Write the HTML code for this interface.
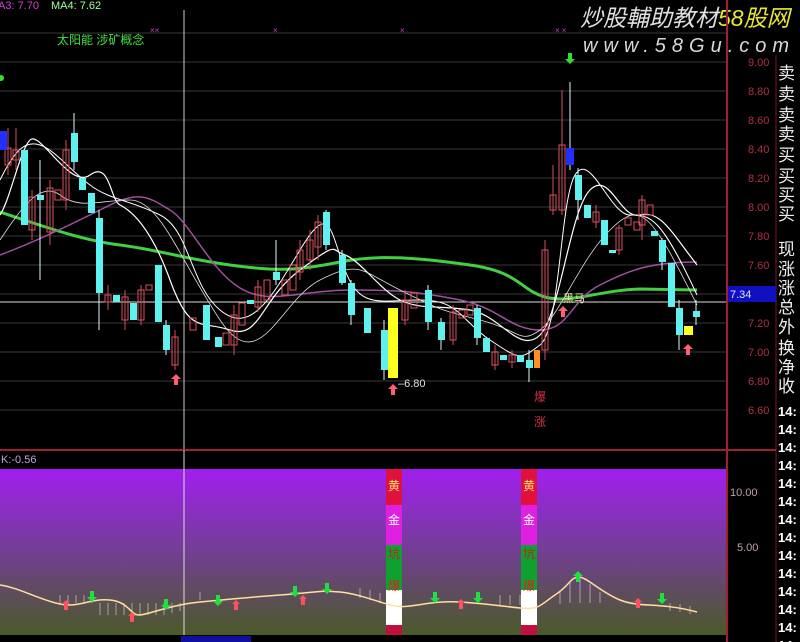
<!DOCTYPE html>
<html><head><meta charset="utf-8"><style>
html,body{margin:0;padding:0;background:#000;width:800px;height:642px;overflow:hidden}
svg{display:block}
text{font-family:"Liberation Sans","Noto Sans CJK SC",sans-serif}
</style></head><body>
<svg width="800" height="642" viewBox="0 0 800 642" xmlns="http://www.w3.org/2000/svg">
<defs>
<linearGradient id="g" x1="0" y1="0" x2="0" y2="1">
<stop offset="0" stop-color="#a21ef0"/>
<stop offset="0.45" stop-color="#763c9c"/>
<stop offset="1" stop-color="#4a5a28"/>
</linearGradient>
</defs>
<rect width="800" height="642" fill="#000"/>
<g stroke="#1c1c1c" stroke-width="2">
<line x1="0" y1="33" x2="727" y2="33"/><line x1="0" y1="62" x2="727" y2="62"/><line x1="0" y1="91" x2="727" y2="91"/><line x1="0" y1="120" x2="727" y2="120"/><line x1="0" y1="149" x2="727" y2="149"/><line x1="0" y1="178" x2="727" y2="178"/><line x1="0" y1="207" x2="727" y2="207"/><line x1="0" y1="236" x2="727" y2="236"/><line x1="0" y1="265" x2="727" y2="265"/><line x1="0" y1="294" x2="727" y2="294"/><line x1="0" y1="323" x2="727" y2="323"/><line x1="0" y1="352" x2="727" y2="352"/><line x1="0" y1="381" x2="727" y2="381"/><line x1="0" y1="410" x2="727" y2="410"/>
</g>
<text x="-2" y="9" font-size="11" fill="#d040d0">A3: 7.70</text>
<text x="51" y="9" font-size="11" fill="#a0ffa0">MA4: 7.62</text>
<text x="57" y="44" font-size="12" fill="#40e040">太阳能 涉矿概念</text>
<g fill="#c040c0" font-size="8"><text x="150" y="33">××</text><text x="273" y="33">×</text><text x="400" y="33">×</text><text x="555" y="33">× ×</text></g>
<circle cx="1" cy="78" r="3" fill="#30e030"/>
<text x="580" y="26" font-size="23" font-style="italic" fill="#e0e0e0">炒股輔助教材<tspan fill="#e8e830">58股网</tspan></text>
<text x="583" y="52" font-size="20" font-style="italic" fill="#d8d8d8" letter-spacing="6">www.58Gu.com</text>
<line x1="184" y1="10" x2="184" y2="642" stroke="#ccc" stroke-width="1"/>
<line x1="0" y1="302" x2="727" y2="302" stroke="#ddd" stroke-width="1"/>
<path d="M0,212 C40,225 80,240 120,245 S180,258 230,265 S300,270 340,262 S420,258 470,265 S520,290 545,297 S600,290 640,289 L697,290" fill="none" stroke="#40d040" stroke-width="3"/>
<path d="M0,255 C40,240 80,220 110,205 S150,198 170,210 S210,270 240,288 S300,290 350,290 S420,292 460,300 S510,330 540,330 S570,300 600,285 S650,262 697,262" fill="none" stroke="#a050a0" stroke-width="1.5"/>
<path d="M0,215 C10,200 20,150 30,140 S70,190 90,175 S110,200 120,205 S150,225 170,280 S200,320 230,330 S260,300 300,270 S330,250 345,255 S380,290 400,300 S440,305 470,310 S520,355 540,335 S570,210 590,190 S620,220 640,215 S670,230 697,265" fill="none" stroke="#fff" stroke-width="1.2"/>
<path d="M0,180 C15,150 25,140 40,145 S70,170 90,185 S130,200 160,215 S190,285 220,310 S270,300 300,250 S330,230 345,270 S380,300 420,300 S460,320 490,340 S520,360 540,345 S560,200 575,175 S610,215 630,215 S660,215 697,295" fill="none" stroke="#fff" stroke-width="1"/>
<path d="M0,240 C20,210 40,180 60,195 S100,200 130,200 S180,260 220,320 S280,300 320,280 S360,270 400,290 S440,310 480,320 S520,345 540,330 S580,260 610,230 S650,210 697,305" fill="none" stroke="#e0e0e0" stroke-width="0.8"/>
<g stroke="#d05060" stroke-width="1">
<line x1="8" y1="128" x2="8" y2="175"/><line x1="16" y1="128" x2="16" y2="170"/><line x1="32" y1="190" x2="32" y2="240"/><line x1="50" y1="180" x2="50" y2="245"/><line x1="66" y1="140" x2="66" y2="210"/><line x1="108" y1="285" x2="108" y2="310"/><line x1="125" y1="290" x2="125" y2="330"/><line x1="141" y1="285" x2="141" y2="325"/><line x1="175" y1="330" x2="175" y2="370"/><line x1="234" y1="305" x2="234" y2="355"/><line x1="258" y1="280" x2="258" y2="312"/><line x1="300" y1="240" x2="300" y2="280"/><line x1="310" y1="230" x2="310" y2="270"/><line x1="318" y1="215" x2="318" y2="260"/><line x1="405" y1="290" x2="405" y2="325"/><line x1="453" y1="305" x2="453" y2="345"/><line x1="495" y1="345" x2="495" y2="370"/><line x1="512" y1="350" x2="512" y2="368"/><line x1="545" y1="240" x2="545" y2="360"/><line x1="553" y1="165" x2="553" y2="215"/><line x1="562" y1="90" x2="562" y2="215"/><line x1="596" y1="205" x2="596" y2="228"/><line x1="619" y1="225" x2="619" y2="255"/><line x1="642" y1="195" x2="642" y2="240"/>
</g>
<g stroke="#e0f8ff" stroke-width="1">
<line x1="40" y1="160" x2="40" y2="280"/><line x1="74" y1="113" x2="74" y2="170"/><line x1="99" y1="210" x2="99" y2="330"/><line x1="166" y1="320" x2="166" y2="355"/><line x1="276" y1="240" x2="276" y2="285"/><line x1="326" y1="210" x2="326" y2="250"/><line x1="342" y1="250" x2="342" y2="285"/><line x1="351" y1="280" x2="351" y2="325"/><line x1="384" y1="320" x2="384" y2="380"/><line x1="428" y1="285" x2="428" y2="330"/><line x1="441" y1="318" x2="441" y2="350"/><line x1="477" y1="305" x2="477" y2="345"/><line x1="529" y1="350" x2="529" y2="382"/><line x1="570" y1="82" x2="570" y2="170"/><line x1="578" y1="168" x2="578" y2="220"/><line x1="662" y1="238" x2="662" y2="270"/><line x1="679" y1="300" x2="679" y2="350"/><line x1="696" y1="300" x2="696" y2="325"/>
</g>
<g fill="none" stroke="#e05060" stroke-width="1">
<rect x="5" y="148" width="6" height="17"/><rect x="13" y="150" width="6" height="10"/><rect x="29" y="197" width="6" height="33"/><rect x="47" y="188" width="6" height="44"/><rect x="55" y="190" width="6" height="10"/><rect x="63" y="150" width="6" height="50"/><rect x="105" y="295" width="6" height="7"/><rect x="122" y="297" width="6" height="23"/><rect x="138" y="290" width="6" height="30"/><rect x="146" y="285" width="6" height="5"/><rect x="172" y="337" width="6" height="28"/><rect x="190" y="318" width="6" height="12"/><rect x="223" y="333" width="6" height="12"/><rect x="231" y="315" width="6" height="30"/><rect x="239" y="303" width="6" height="22"/><rect x="255" y="287" width="6" height="20"/><rect x="264" y="280" width="6" height="20"/><rect x="282" y="280" width="6" height="15"/><rect x="290" y="265" width="6" height="25"/><rect x="297" y="250" width="6" height="22"/><rect x="307" y="240" width="6" height="20"/><rect x="315" y="222" width="6" height="25"/><rect x="402" y="300" width="6" height="20"/><rect x="411" y="293" width="6" height="15"/><rect x="450" y="312" width="6" height="28"/><rect x="459" y="310" width="6" height="8"/><rect x="467" y="305" width="6" height="10"/><rect x="492" y="352" width="6" height="13"/><rect x="509" y="355" width="6" height="7"/><rect x="542" y="250" width="6" height="100"/><rect x="550" y="195" width="6" height="15"/><rect x="559" y="145" width="6" height="65"/><rect x="593" y="212" width="6" height="10"/><rect x="616" y="228" width="6" height="22"/><rect x="625" y="218" width="6" height="7"/><rect x="634" y="222" width="6" height="8"/><rect x="639" y="200" width="6" height="25"/><rect x="647" y="205" width="6" height="10"/>
</g>
<g fill="#5ff0f0">
<rect x="21" y="150" width="7" height="75"/><rect x="37" y="195" width="7" height="5"/><rect x="71" y="133" width="7" height="29"/><rect x="79" y="178" width="7" height="12"/><rect x="88" y="193" width="7" height="20"/><rect x="96" y="218" width="7" height="75"/><rect x="113" y="295" width="7" height="7"/><rect x="130" y="303" width="7" height="17"/><rect x="155" y="265" width="7" height="35"/><rect x="155" y="293" width="7" height="29"/><rect x="163" y="325" width="7" height="25"/><rect x="203" y="305" width="7" height="35"/><rect x="215" y="337" width="7" height="10"/><rect x="247" y="300" width="7" height="4"/><rect x="273" y="272" width="7" height="8"/><rect x="323" y="212" width="7" height="33"/><rect x="339" y="255" width="7" height="28"/><rect x="348" y="283" width="7" height="32"/><rect x="364" y="308" width="7" height="25"/><rect x="381" y="330" width="7" height="40"/><rect x="425" y="290" width="7" height="32"/><rect x="438" y="322" width="7" height="18"/><rect x="474" y="308" width="7" height="30"/><rect x="483" y="338" width="7" height="14"/><rect x="500" y="355" width="7" height="5"/><rect x="517" y="355" width="7" height="7"/><rect x="526" y="360" width="7" height="8"/><rect x="575" y="175" width="7" height="25"/><rect x="584" y="205" width="7" height="13"/><rect x="601" y="220" width="7" height="25"/><rect x="609" y="250" width="7" height="3"/><rect x="651" y="231" width="7" height="5"/><rect x="659" y="240" width="7" height="22"/><rect x="668" y="263" width="7" height="44"/><rect x="676" y="308" width="7" height="27"/><rect x="693" y="311" width="7" height="6"/>
</g>
<rect x="0" y="131" width="7" height="19" fill="#2030ff"/>
<rect x="566" y="148" width="8" height="17" fill="#2030ff"/>
<rect x="388" y="308" width="10" height="70" fill="#ffff20"/>
<rect x="684" y="326" width="9" height="9" fill="#ffff20"/>
<rect x="534" y="350" width="6" height="18" fill="#ff9020"/>
<g fill="#ff6070">
<path d="M176,374 l5,5 h-3 v6 h-4 v-6 h-3z"/><path d="M393,384 l5,5 h-3 v6 h-4 v-6 h-3z"/><path d="M563,306 l5,5 h-3 v6 h-4 v-6 h-3z"/><path d="M688,344 l5,5 h-3 v6 h-4 v-6 h-3z"/>
</g>
<path d="M570,64 l-5,-5 h3 v-6 h4 v6 h3z" fill="#30e030"/>
<text x="398" y="387" font-size="11" fill="#e0e0e0">–6.80</text>
<text x="563" y="302" font-size="11" fill="#e8e8a0">黑马</text>
<text x="534" y="401" font-size="12" fill="#d03040">爆</text>
<text x="534" y="426" font-size="12" fill="#d03040">涨</text>
<line x1="727" y1="0" x2="727" y2="642" stroke="#a02030" stroke-width="2"/>
<line x1="776" y1="55" x2="776" y2="642" stroke="#801828" stroke-width="1"/>
<g font-size="11" fill="#b03040">
<text x="748" y="66">9.00</text><text x="748" y="95">8.80</text><text x="748" y="124">8.60</text><text x="748" y="153">8.40</text><text x="748" y="182">8.20</text><text x="748" y="211">8.00</text><text x="748" y="240">7.80</text><text x="748" y="269">7.60</text><text x="748" y="327">7.20</text><text x="748" y="356">7.00</text><text x="748" y="385">6.80</text><text x="748" y="414">6.60</text>
</g>
<rect x="728" y="286" width="48" height="16" fill="#1010c0"/>
<text x="730" y="298" font-size="11" fill="#e0e0ff">7.34</text>
<g font-size="17" fill="#eee">
<text x="778" y="79">卖</text><text x="778" y="100">卖</text><text x="778" y="121">卖</text><text x="778" y="140">卖</text><text x="778" y="161">买</text><text x="778" y="182">买</text><text x="778" y="201">买</text><text x="778" y="220">买</text><text x="778" y="255">现</text><text x="778" y="275">涨</text><text x="778" y="294">涨</text><text x="778" y="313">总</text><text x="778" y="333">外</text><text x="778" y="354">换</text><text x="778" y="373">净</text><text x="778" y="392">收</text>
</g>
<g font-size="13" font-weight="bold" fill="#fff">
<text x="778" y="416">14:</text><text x="778" y="434">14:</text><text x="778" y="452">14:</text><text x="778" y="470">14:</text><text x="778" y="488">14:</text><text x="778" y="506">14:</text><text x="778" y="524">14:</text><text x="778" y="542">14:</text><text x="778" y="560">14:</text><text x="778" y="578">14:</text><text x="778" y="596">14:</text><text x="778" y="614">14:</text><text x="778" y="632">14:</text><text x="778" y="650">14:</text>
</g>
<line x1="0" y1="450" x2="776" y2="450" stroke="#a02030" stroke-width="2"/>
<text x="1" y="463" font-size="11" fill="#c0a0e0">K:-0.56</text>
<rect x="0" y="469" width="726" height="166" fill="url(#g)"/>
<line x1="184" y1="450" x2="184" y2="642" stroke="#ddd" stroke-width="1"/>
<g font-size="11" fill="#c0a0b0"><text x="730" y="496">10.00</text><text x="737" y="551">5.00</text></g>
<g>
<rect x="386" y="469" width="16" height="36" fill="#e01040"/><rect x="386" y="505" width="16" height="40" fill="#e020e0"/><rect x="386" y="545" width="16" height="45" fill="#10a030"/><rect x="386" y="590" width="16" height="35" fill="#fff"/><rect x="386" y="625" width="16" height="17" fill="#c01040"/>
<rect x="521" y="469" width="16" height="36" fill="#e01040"/><rect x="521" y="505" width="16" height="40" fill="#e020e0"/><rect x="521" y="545" width="16" height="45" fill="#10a030"/><rect x="521" y="590" width="16" height="35" fill="#fff"/><rect x="521" y="625" width="16" height="17" fill="#c01040"/>
</g>
<g font-size="12">
<text x="388" y="490" fill="#ffe060">黄</text><text x="388" y="524" fill="#fff">金</text><text x="388" y="558" fill="#c02020">坑</text><text x="388" y="590" fill="#e02020">爆</text><text x="388" y="616" fill="#fff">点</text>
<text x="523" y="490" fill="#ffe060">黄</text><text x="523" y="524" fill="#fff">金</text><text x="523" y="558" fill="#c02020">坑</text><text x="523" y="590" fill="#e02020">爆</text><text x="523" y="616" fill="#fff">点</text>
</g>
<g stroke="#e8e0e0" stroke-width="0.7" opacity="0.8">
<path d="M60,603v-8M68,603v-8M76,603v-8M84,603v-8M92,603v-8M100,603v12M108,603v12M116,603v12M124,603v12M132,603v12M140,603v12M148,603v12M156,603v12M164,603v12M172,603v10M180,603v8M200,600v-8M560,592v12M570,583v20M580,578v25M590,584v19M600,592v11M690,606v8M680,604v8M670,603v8M520,605v-10M510,605v-10M500,605v-10M380,603v-10M370,600v-10M360,598v-10"/>
</g>
<path d="M0,585 C20,588 40,600 60,604 S90,598 110,600 S130,616 140,615 S170,605 200,602 S240,598 280,595 S320,590 340,592 S380,603 395,606 S430,600 460,602 S500,606 520,608 S540,605 555,595 S570,578 578,577 S600,592 620,600 S660,602 697,612" fill="none" stroke="#ffe0a0" stroke-width="1.5"/>
<g fill="#20e040">
<path d="M92,602 l-5,-5 h3 v-6 h4 v6 h3z"/><path d="M166,610 l-5,-5 h3 v-6 h4 v6 h3z"/><path d="M218,606 l-5,-5 h3 v-6 h4 v6 h3z"/><path d="M295,597 l-5,-5 h3 v-6 h4 v6 h3z"/><path d="M327,594 l-5,-5 h3 v-6 h4 v6 h3z"/><path d="M435,603 l-5,-5 h3 v-6 h4 v6 h3z"/><path d="M478,603 l-5,-5 h3 v-6 h4 v6 h3z"/><path d="M662,604 l-5,-5 h3 v-6 h4 v6 h3z"/><path d="M578,571 l5,5 h-3 v6 h-4 v-6 h-3z"/>
</g>
<g fill="#ff5060">
<path d="M66,600 l4,4 h-2 v6 h-4 v-6 h-2z"/><path d="M132,612 l4,4 h-2 v6 h-4 v-6 h-2z"/><path d="M236,600 l4,4 h-2 v6 h-4 v-6 h-2z"/><path d="M303,595 l4,4 h-2 v6 h-4 v-6 h-2z"/><path d="M461,599 l4,4 h-2 v6 h-4 v-6 h-2z"/><path d="M638,598 l4,4 h-2 v6 h-4 v-6 h-2z"/>
</g>
<rect x="0" y="635" width="726" height="7" fill="#000"/>
<rect x="181" y="636" width="70" height="6" fill="#1010a0"/>
</svg>
</body></html>
